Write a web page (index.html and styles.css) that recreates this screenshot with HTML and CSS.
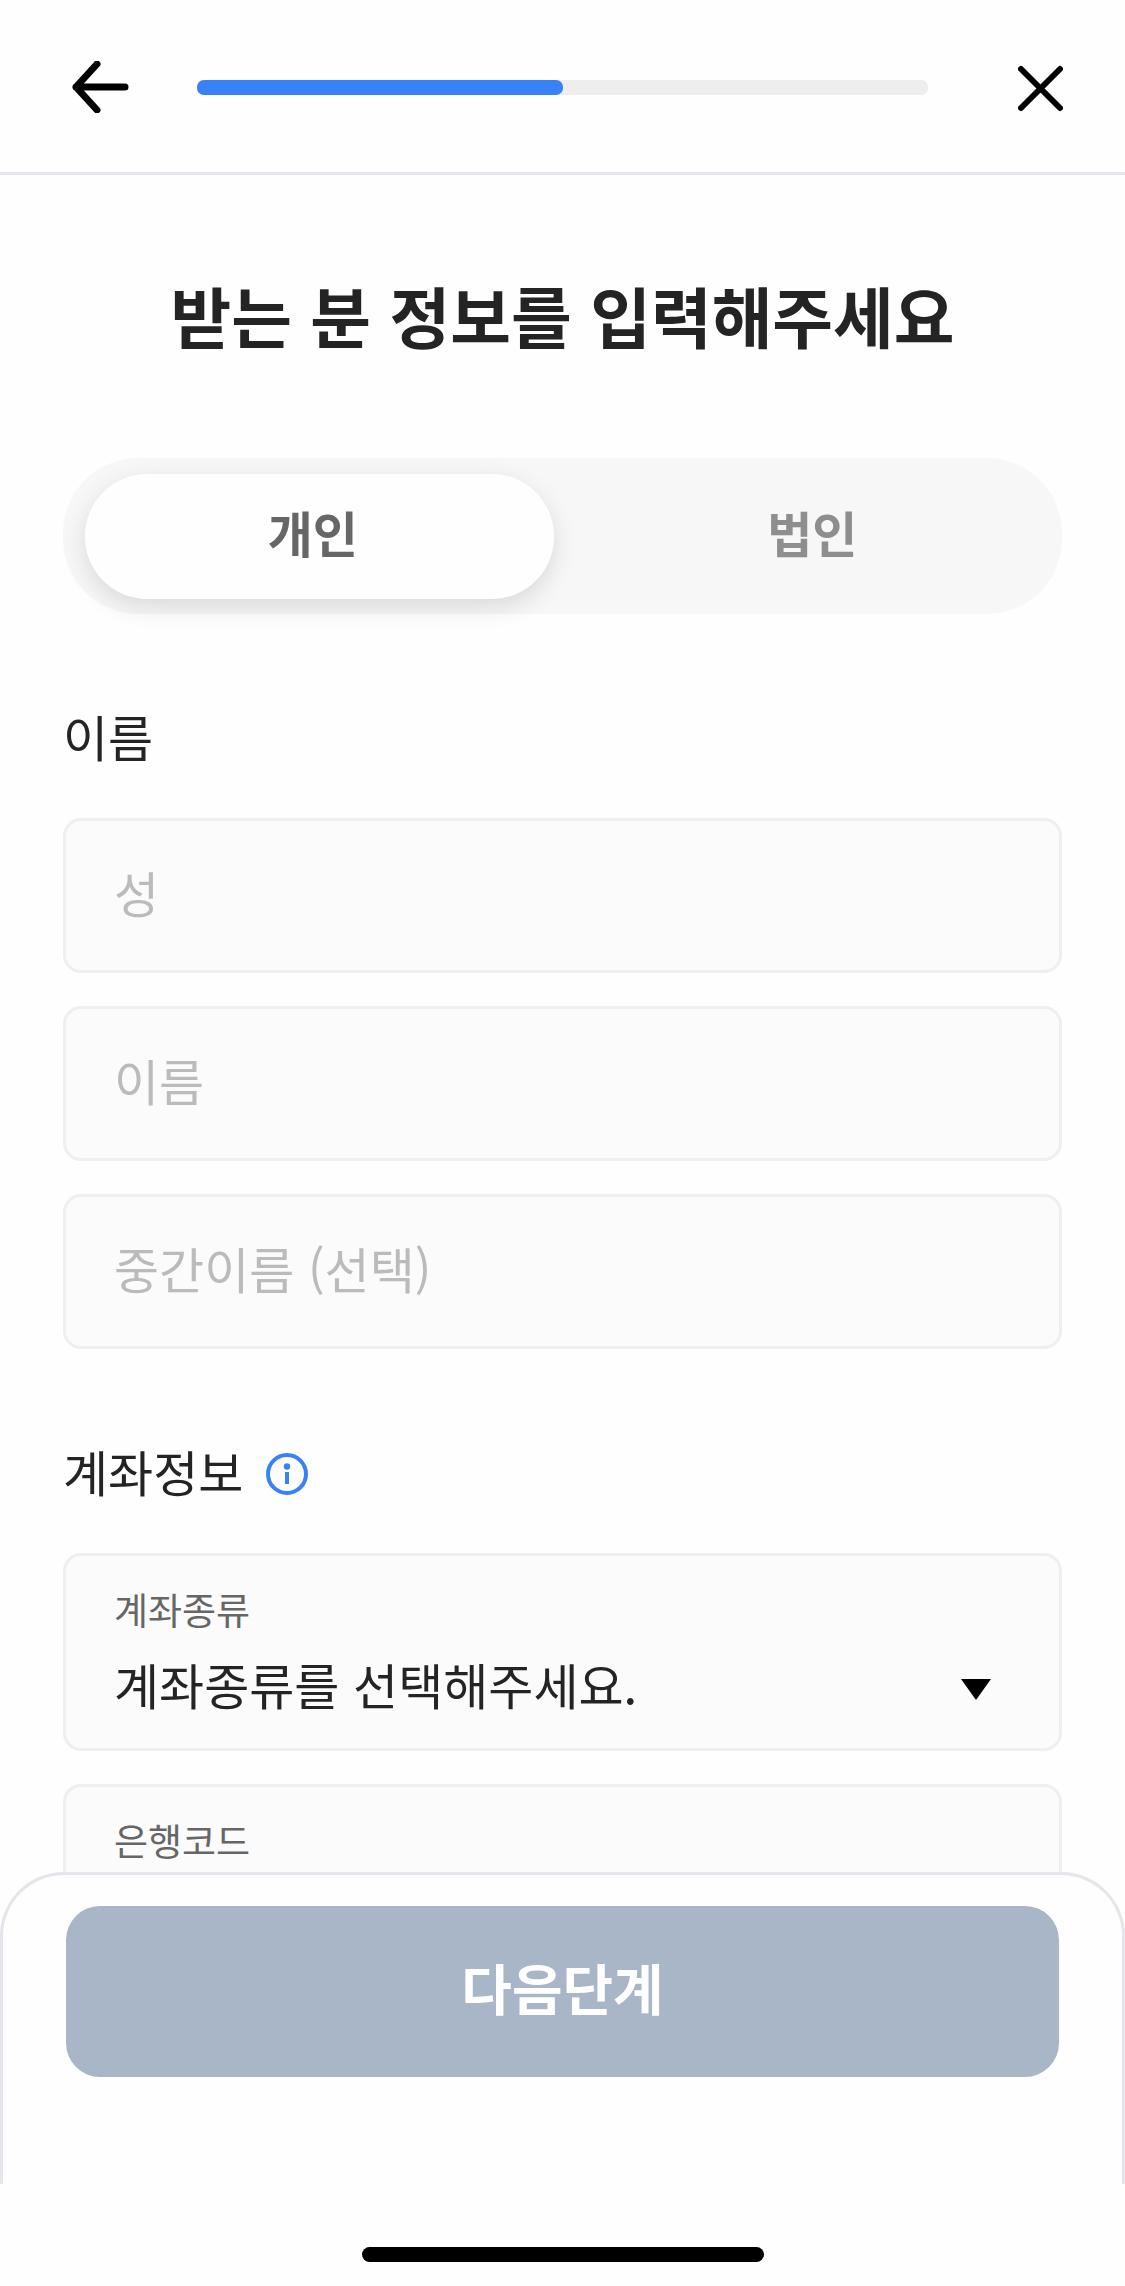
FILE: index.html
```html
<!DOCTYPE html>
<html lang="ko">
<head>
  <meta charset="utf-8">
  <meta name="viewport" content="width=device-width, initial-scale=1">
  <title>받는 분 정보</title>
  <link rel="stylesheet" href="styles.css">
</head>
<body class="screen">
  <header class="topbar">
    <button class="icon-button" type="button" aria-label="뒤로">
      <svg class="icon-back" viewBox="0 0 57 52" aria-hidden="true"><path d="M25 3 4 26l21 23M4 26h49"/></svg>
    </button>
    <progress class="progress" value="50" max="100" aria-label="진행률"></progress>
    <button class="icon-button" type="button" aria-label="닫기">
      <svg class="icon-close" viewBox="0 0 45 52" aria-hidden="true"><path d="M3 8l39 39M42 8L3 47"/></svg>
    </button>
  </header>

  <main class="content">
    <h1 class="title">받는 분 정보를 입력해주세요</h1>
    <form class="form" id="recipient">
      <div class="tabs" role="radiogroup" aria-label="받는 분 유형">
        <label class="tab"><input class="tab-input" type="radio" name="kind" checked>개인</label>
        <label class="tab"><input class="tab-input" type="radio" name="kind">법인</label>
      </div>

      <section class="group">
        <h2 class="group-title">이름</h2>
        <div class="fields">
          <input class="field text-field" type="text" placeholder="성" aria-label="성">
          <input class="field text-field" type="text" placeholder="이름" aria-label="이름">
          <input class="field text-field" type="text" placeholder="중간이름 (선택)" aria-label="중간이름 (선택)">
        </div>
      </section>

      <section class="group">
        <h2 class="group-title">계좌정보
          <button class="icon-button info-button" type="button" aria-label="계좌정보 안내">
            <svg class="icon-info" viewBox="0 0 42 42" aria-hidden="true"><circle class="ring" cx="21" cy="21" r="19"/><circle cx="21" cy="13.500" r="3.200"/><path d="M19 19h4v12h-4z"/></svg>
          </button>
        </h2>
        <div class="fields">
          <div class="field select-field">
            <label class="select-label" for="account-type">계좌종류</label>
            <div class="select-row">
              <select class="select" id="account-type"><option>계좌종류를 선택해주세요.</option></select>
              <svg class="caret" viewBox="0 0 30 21" aria-hidden="true"><path d="M0 0h30L15 21z"/></svg>
            </div>
          </div>
          <div class="field select-field">
            <label class="select-label" for="bank-code">은행코드</label>
            <div class="select-row">
              <select class="select" id="bank-code"><option></option></select>
              <svg class="caret" viewBox="0 0 30 21" aria-hidden="true"><path d="M0 0h30L15 21z"/></svg>
            </div>
          </div>
        </div>
      </section>
    </form>
  </main>

  <footer class="actions">
    <button class="next" type="submit" form="recipient">다음단계</button>
  </footer>
  <div class="home-area"><div class="home-indicator"></div></div>
</body>
</html>
```
FILE: styles.css
```css
* {
  box-sizing: border-box;
}

.screen {
  display: flex;
  flex-direction: column;
  height: 100vh;
  margin: 0;
  background: #fefefe;
  color: #242424;
  font-family: "Noto Sans CJK KR", sans-serif;
  font-size: 49px;
  line-height: 72px;
}

button,
input,
select {
  margin: 0;
  color: inherit;
  font: inherit;
}

/* Top bar */
.topbar {
  display: flex;
  flex: none;
  align-items: center;
  padding: 61px 62px 59px 72px;
  border-bottom: 3px solid #e5e5eb;
}

.icon-button {
  display: flex;
  flex: none;
  padding: 0;
  border: 0;
  background: none;
}

.icon-back,
.icon-close {
  height: 52px;
  fill: none;
  stroke: #000;
  stroke-linecap: round;
  stroke-linejoin: round;
}

.icon-back {
  width: 57px;
  stroke-width: 7px;
}

.icon-close {
  width: 45px;
  stroke-width: 6px;
}

.progress {
  flex: 1;
  min-width: 0;
  height: 15px;
  margin: 0 90px 0 68px;
  border: 0;
  border-radius: 7px;
  background: #eee;
  appearance: none;
}

.progress::-webkit-progress-bar {
  border-radius: 7px;
  background: #eee;
}

.progress::-webkit-progress-value {
  border-radius: 7px;
  background: #3981f7;
}

/* Scrolling content */
.content {
  flex: 1;
  min-height: 0;
  padding: 91px 63px 0;
  overflow-y: auto;
  scrollbar-width: none;
}

.title {
  margin: 0 0 96px;
  font-size: 66px;
  font-weight: 700;
  line-height: 96px;
  text-align: center;
}

.form {
  display: flex;
  flex-direction: column;
  gap: 86px;
}

.tabs {
  display: grid;
  grid-template-columns: 1fr 1fr;
  border-radius: 75px;
  background: #f7f7f7;
}

.tab {
  margin: 16px 9px 15px 22px;
  padding: 22px 13px 31px 0;
  border-radius: 62px;
  color: #8e8e8e;
  font-weight: 700;
  text-align: center;
}

.tab:has(:checked) {
  background: #fefefe;
  box-shadow: 0 8px 24px rgba(0, 0, 0, 0.12);
  color: #666;
}

.tab-input {
  position: absolute;
  opacity: 0;
  pointer-events: none;
}

.group {
  display: flex;
  flex-direction: column;
  gap: 46px;
}

.group-title {
  display: flex;
  align-items: center;
  gap: 23px;
  margin: 0;
  font-size: 49px;
  font-weight: 400;
}

.info-button {
  padding-top: 6px;
}

.icon-info {
  width: 42px;
  height: 42px;
  fill: #3981f7;
}

.ring {
  fill: none;
  stroke: #3981f7;
  stroke-width: 4px;
}

.fields {
  display: flex;
  flex-direction: column;
  gap: 33px;
}

.field {
  width: 100%;
  border: 3px solid #efefef;
  border-radius: 18px;
  background: #fbfbfb;
}

.text-field {
  padding: 35px 48px 42px;
  outline: 0;
}

.text-field::placeholder {
  color: #bbb;
  opacity: 1;
}

.select-field {
  display: flex;
  flex-direction: column;
  gap: 11px;
  padding: 25px 48px 28px;
}

.select-label {
  color: #666;
  font-size: 37px;
  line-height: 56px;
}

.select-row {
  display: grid;
  align-items: center;
}

.select {
  grid-area: 1 / 1;
  width: 100%;
  height: 72px;
  padding: 0;
  border: 0;
  outline: 0;
  background: none;
  appearance: none;
}

.caret {
  grid-area: 1 / 1;
  justify-self: end;
  width: 30px;
  height: 21px;
  margin: 10px 20px 0 0;
  pointer-events: none;
}

/* Bottom sheet */
.actions {
  flex: none;
  padding: 31px 63px 107px;
  border: 3px solid #e5e5eb;
  border-bottom: 0;
  border-radius: 64px 64px 0 0;
}

.next {
  display: block;
  width: 100%;
  padding: 44px 24px 55px;
  border: 0;
  border-radius: 34px;
  background: #a9b6c7;
  color: #fff;
  font-size: 55px;
  font-weight: 700;
}

.home-area {
  flex: none;
  padding: 63px 0 24px;
}

.home-indicator {
  width: 402px;
  height: 15px;
  margin: 0 auto;
  border-radius: 8px;
  background: #000;
}
```
